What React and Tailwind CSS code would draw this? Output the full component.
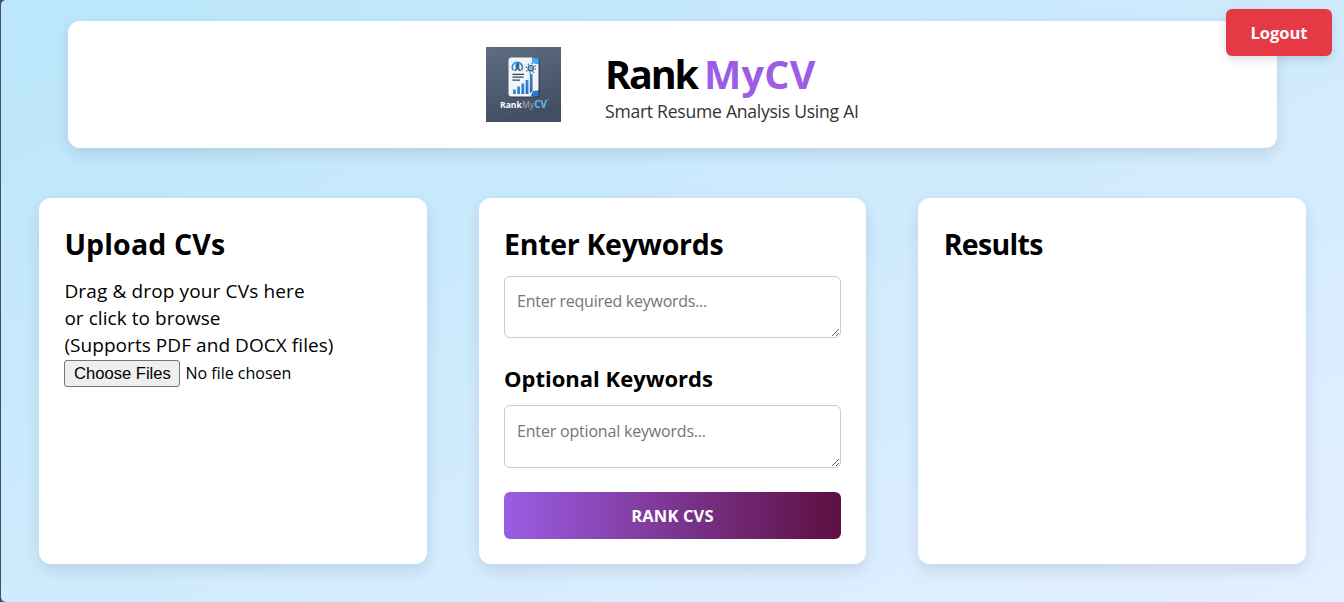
function Logo() {
  return (
    <svg width="75" height="75" viewBox="0 0 75 75" className="shrink-0">
      <defs>
        <linearGradient id="tile" x1="0" y1="0" x2="0.3" y2="1">
          <stop offset="0" stopColor="#5d6d82" />
          <stop offset="0.5" stopColor="#505e73" />
          <stop offset="1" stopColor="#434e62" />
        </linearGradient>
        <linearGradient id="bar" x1="0" y1="0" x2="1" y2="1">
          <stop offset="0" stopColor="#45a9f0" />
          <stop offset="1" stopColor="#2068b8" />
        </linearGradient>
      </defs>
      <rect width="75" height="75" fill="url(#tile)" />
      <rect x="23.5" y="12.5" width="30.5" height="38.5" rx="3.5" fill="#2b3547" opacity="0.55" />
      <path d="M25.5 10.5H46L52.5 17V43L46 49.5H25.5Q22.5 49.5 22.5 46.5V13.5Q22.5 10.5 25.5 10.5Z" fill="#f1f4f8" />
      <path d="M46 11H50Q52.5 11 52.5 13.5V17.5L46 16Z" fill="#38aef0" />
      <path d="M44.5 49.5L47 44L52.5 43.5V47Q52.5 49.5 50 49.5Z" fill="#2a78cc" />
      <path d="M27.3 23.3A5 5 0 1 1 35.5 23.1" fill="none" stroke="#2b8fd8" strokeWidth="1.8" />
      <path d="M31.5 15.5C33.5 16 34 19 33 21L35.5 24H33L31.5 22L30 24H27.8L30 21C29 19 29.5 16 31.5 15.5Z" fill="#35688f" />
      <circle cx="44.8" cy="21.3" r="2.8" fill="#5bc2f4" stroke="#46586c" strokeWidth="1.1" />
      <circle cx="44.8" cy="21.3" r="4.7" fill="none" stroke="#46586c" strokeWidth="1.3" strokeDasharray="1.2 2.49" />
      <path d="M26.5 27.3H38M26.5 30.2H37.5M26.5 33.1H34" stroke="#364150" strokeWidth="1.3" />
      <path d="M27 42.5h2.8v4.5h-2.8zM31.2 39.5h2.8v7.5h-2.8zM35.4 36.5h2.8v10.5h-2.8zM39.6 33h2.8v14h-2.8zM43.8 27h2.8v17l-2.8 2.5z" fill="url(#bar)" />
      <text x="14" y="61" fontFamily="'Open Sans', sans-serif" fontSize="9.6" fontWeight="700" fill="#ffffff" textLength="21.8" lengthAdjust="spacingAndGlyphs">Rank</text>
      <text x="36.2" y="61" fontFamily="'Open Sans', sans-serif" fontSize="9.4" fill="#a3adba" textLength="11.6" lengthAdjust="spacingAndGlyphs">My</text>
      <text x="48.2" y="61" fontFamily="'Open Sans', sans-serif" fontSize="9.8" fontWeight="700" fill="#55bdf2" textLength="12.8" lengthAdjust="spacingAndGlyphs">CV</text>
      <circle cx="62" cy="52.8" r="0.6" fill="#a8d8f2" />
    </svg>
  );
}

function Card({ children }) {
  return (
    <section className="flex flex-col rounded-[12px] bg-white px-[25.4px] pt-[26px] shadow-[0_6px_15px_rgba(0,0,0,0.1)]">
      {children}
    </section>
  );
}

const field =
  "block w-full resize rounded-[6px] border border-[#ccc] bg-white px-3 text-[16px] leading-6 placeholder:text-[#757575] outline-none overflow-hidden";

export default function App() {
  return (
    <div className="h-[602px] overflow-hidden bg-[#454e66] pl-px font-['Open_Sans','Noto_Sans',sans-serif] text-black">
      <div className="relative h-full rounded-l-[5px] bg-[linear-gradient(to_bottom_right,#bae6fb_0%,#e3efff_100%)] pl-[38px] pr-[38px] pt-[21px]">
        <button className="absolute right-[12px] top-[9px] h-[47px] w-[106px] rounded-[6px] bg-[#e63946] pt-[2px] text-[16.5px] font-bold text-white shadow-[0_4px_10px_rgba(0,0,0,0.12)]">
          Logout
        </button>

        <header className="mx-[29px] flex h-[127px] justify-center rounded-[12px] bg-white pt-[26px] shadow-[0_6px_15px_rgba(0,0,0,0.1)]">
          <div className="flex gap-11">
            <Logo />
            <div className="pt-[3px]">
              <h1 className="flex text-[39.5px] font-bold leading-[48px]">
                <span className="w-[99px] tracking-[-2.1px]">Rank</span>
                <span className="tracking-[0.3px] text-[#9b5de5]">MyCV</span>
              </h1>
              <p className="w-[254px] whitespace-nowrap text-[17.6px] leading-[26px] tracking-[-0.27px] text-[#333]">
                Smart Resume Analysis Using AI
              </p>
            </div>
          </div>
        </header>

        <main className="mt-[50px] grid h-[366px] grid-cols-3 gap-[52px]">
          <Card>
            <h2 className="text-[28.5px] font-bold leading-10 tracking-[0.15px]">Upload CVs</h2>
            <div className="mt-[14px] whitespace-nowrap text-[19px] leading-[27px]">
              <p className="tracking-[0.14px]">Drag &amp; drop your CVs here</p>
              <p className="tracking-[0.05px]">or click to browse</p>
              <p className="tracking-[0.06px]">(Supports PDF and DOCX files)</p>
            </div>
            <input
              type="file"
              multiple
              className="mt-px block h-[27px] w-[300px] text-[16px] leading-[25px] file:mr-[5px] file:h-[27px] file:w-[116px] file:rounded-[3px] file:border file:border-solid file:border-[#767676] file:bg-[#efefef] file:p-0 file:font-['Liberation_Sans',sans-serif] file:text-[16.6px] file:text-black"
            />
          </Card>

          <Card>
            <h2 className="whitespace-nowrap text-[28.5px] font-bold leading-10 tracking-[-0.3px]">Enter Keywords</h2>
            <textarea className={`${field} mt-[12px] h-[62px] py-[12px] tracking-[-0.26px]`} placeholder="Enter required keywords..." />
            <h3 className="mt-[25px] whitespace-nowrap text-[22px] font-bold leading-[30px]">Optional Keywords</h3>
            <textarea className={`${field} mt-[12px] h-[63px] py-[13px] tracking-[-0.19px]`} placeholder="Enter optional keywords..." />
            <button className="mt-[24px] h-[47px] w-full rounded-[6px] bg-[linear-gradient(90deg,#9b5de5,#5c0f3f)] pt-[2px] text-[16.5px] font-bold tracking-[0.15px] text-white">
              RANK CVS
            </button>
          </Card>

          <Card>
            <h2 className="text-[28.5px] font-bold leading-10 tracking-[-0.7px]">Results</h2>
          </Card>
        </main>
      </div>
    </div>
  );
}
